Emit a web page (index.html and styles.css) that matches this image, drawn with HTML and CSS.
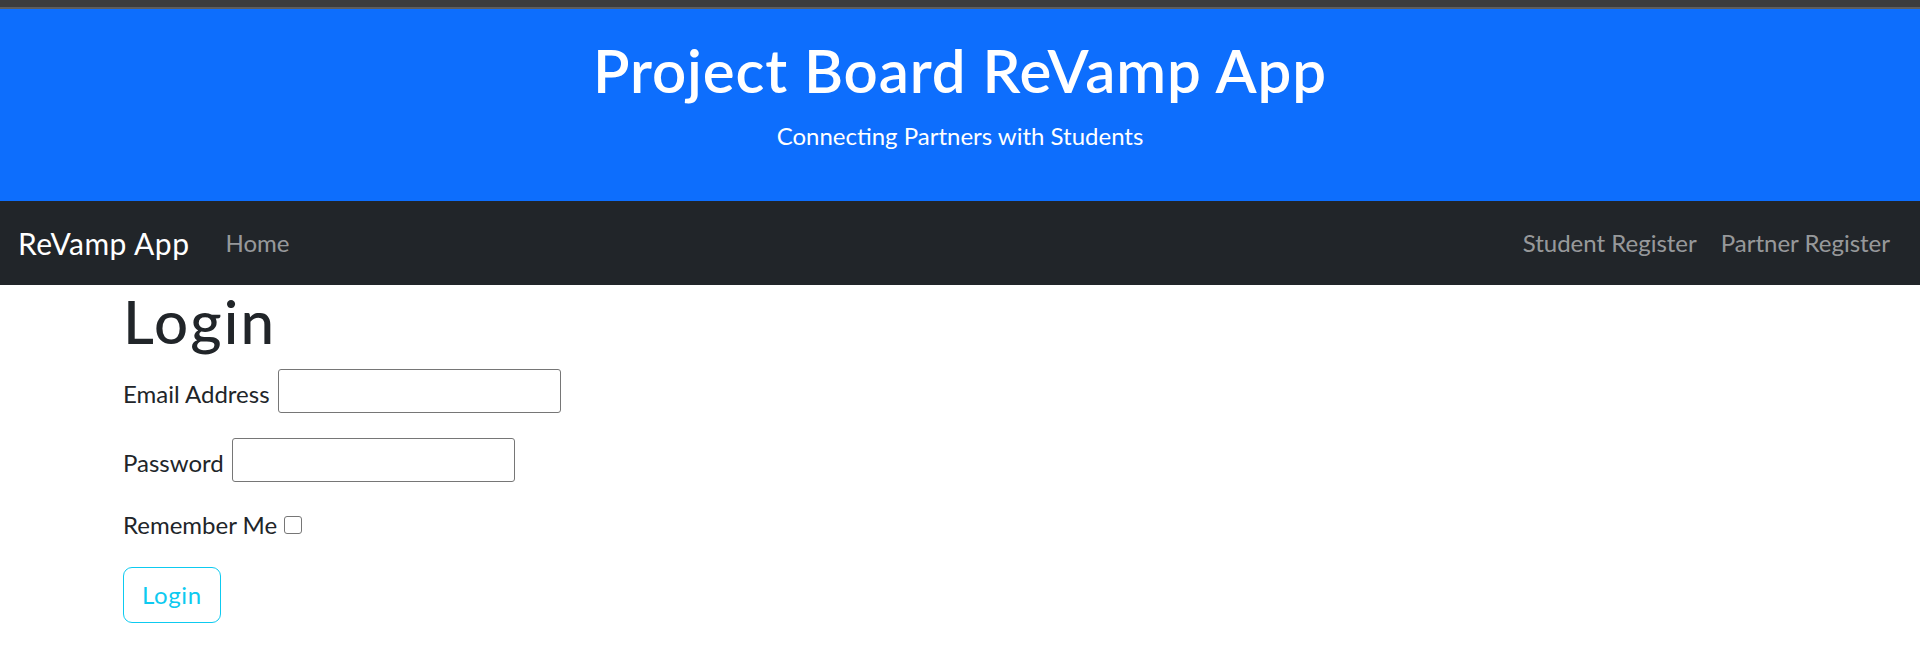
FILE: index.html
```html
<!DOCTYPE html>
<html lang="en">
<head>
<meta charset="utf-8">
<title>Project Board ReVamp App</title>
<link rel="stylesheet" href="styles.css">
</head>
<body>
<div class="chrome-strip"></div>
<header class="hero">
  <h1 class="hero-title">Project Board ReVamp App</h1>
  <p class="hero-sub">Connecting Partners with Students</p>
</header>
<nav class="navbar">
  <a class="brand" href="#">ReVamp App</a>
  <ul class="nav">
    <li><a class="nav-link" href="#">Home</a></li>
  </ul>
  <ul class="nav nav-right">
    <li><a class="nav-link" href="#">Student Register</a></li>
    <li><a class="nav-link" href="#">Partner Register</a></li>
  </ul>
</nav>
<main class="container">
  <h1 class="page-title">Login</h1>
  <form class="login-form">
    <div class="field">
      <label class="field-label" for="email">Email Address</label>
      <input class="text-input" id="email" type="text">
    </div>
    <div class="field">
      <label class="field-label" for="password">Password</label>
      <input class="text-input" id="password" type="password">
    </div>
    <div class="field field-check">
      <label class="check-label" for="remember">Remember Me</label>
      <input class="checkbox" id="remember" type="checkbox">
    </div>
    <button class="btn-outline-info" type="button">Login</button>
  </form>
</main>
</body>
</html>
```
FILE: styles.css
```css
* { box-sizing: border-box; }
html, body { margin: 0; padding: 0; }
body {
  font-family: Lato, "Open Sans", sans-serif;
  font-size: 24px;
  line-height: 36px;
  color: #212529;
  background: #fff;
}
.chrome-strip {
  height: 9px;
  background: #3c3c3c;
  border-bottom: 2px solid #5e5e5e;
}
.hero {
  background: #0d6efd;
  color: #fff;
  text-align: center;
  padding: 25px 0 23px;
}
.hero-title {
  margin: 0 0 12px;
  font-size: 60px;
  line-height: 72px;
  font-weight: 600;
  letter-spacing: 0.9px;
}
.hero-sub {
  margin: 0 0 24px;
  font-size: 24px;
  line-height: 36px;
}
.navbar {
  display: flex;
  align-items: center;
  background: #212529;
  padding: 12px 18px;
}
.brand {
  color: #fff;
  text-decoration: none;
  font-size: 30px;
  line-height: 45px;
  padding: 7.5px 0;
  margin-right: 24px;
  letter-spacing: 0.5px;
}
.nav {
  display: flex;
  list-style: none;
  margin: 0;
  padding: 0;
}
.nav-right { margin-left: auto; }
.nav-link {
  display: block;
  padding: 12px;
  color: rgba(255, 255, 255, 0.55);
  text-decoration: none;
  font-size: 24px;
  line-height: 36px;
}
.container {
  max-width: 1710px;
  margin: 0 auto;
  padding: 0 18px;
}
.page-title {
  margin: 0 0 12px;
  font-size: 60px;
  line-height: 72px;
  font-weight: 500;
  letter-spacing: 2.2px;
}
.login-form { margin: 0; }
.field {
  display: flex;
  align-items: center;
  gap: 8px;
  margin-bottom: 25px;
}
.field-label { padding-top: 5px; }
.text-input {
  width: 283px;
  height: 44px;
  border: 1px solid #767676;
  border-radius: 3px;
  background: #fff;
  font: inherit;
  padding: 0 3px;
}
.field-check {
  gap: 7px;
  margin-bottom: 24px;
}
.checkbox {
  appearance: none;
  -webkit-appearance: none;
  width: 18px;
  height: 18px;
  margin: 0;
  border: 1.5px solid #767676;
  border-radius: 3px;
  background: #fff;
}
.btn-outline-info {
  display: inline-block;
  font: inherit;
  font-size: 24px;
  line-height: 36px;
  padding: 9px 18px;
  letter-spacing: 0.6px;
  color: #0dcaf0;
  background: transparent;
  border: 1px solid #0dcaf0;
  border-radius: 9px;
  cursor: pointer;
}
```
